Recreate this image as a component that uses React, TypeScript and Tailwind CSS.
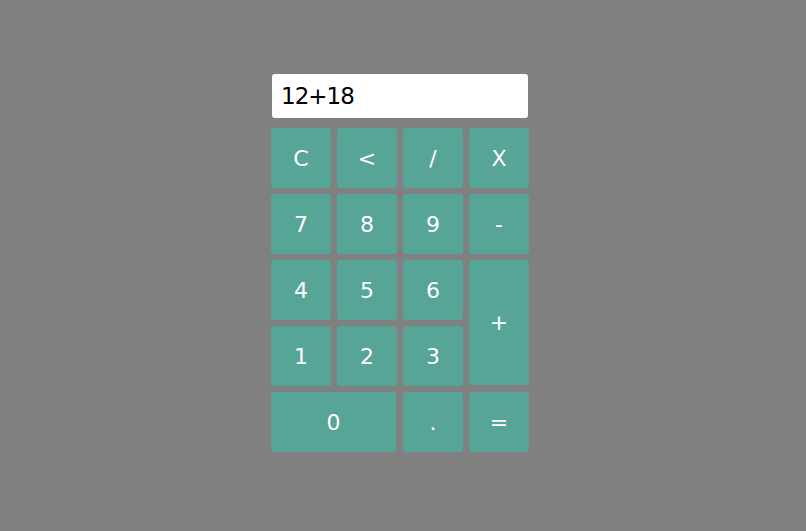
import React from "react";

const btn =
  "flex items-center justify-center rounded-[3px] bg-[#56a597] text-white text-[22px]";

export default function App() {
  const font = { fontFamily: '"DejaVu Sans", Verdana, sans-serif' };
  return (
    <div className="w-[806px] h-[531px] bg-[#808080] pt-[74px] pl-[271px]" style={font}>
      <div className="w-[258px]">
        <div className="ml-[1px] w-[256px] h-[44px] bg-white rounded-[3px] flex items-center pl-[9px] text-[23px] text-black tracking-[-1px]">
          12+18
        </div>
        <div className="mt-[10px] grid grid-cols-[repeat(4,60px)] grid-rows-[repeat(5,60px)] gap-[6px]">
          <div className={btn}>C</div>
          <div className={btn}>&lt;</div>
          <div className={btn}>/</div>
          <div className={btn}>X</div>
          <div className={btn}>7</div>
          <div className={btn}>8</div>
          <div className={btn}>9</div>
          <div className={btn}>-</div>
          <div className={btn}>4</div>
          <div className={btn}>5</div>
          <div className={btn}>6</div>
          <div className={btn + " row-span-2 mb-[1px]"}>+</div>
          <div className={btn}>1</div>
          <div className={btn}>2</div>
          <div className={btn}>3</div>
          <div className={btn + " col-span-2 mr-[1px]"}>0</div>
          <div className={btn}>.</div>
          <div className={btn}>=</div>
        </div>
      </div>
    </div>
  );
}
